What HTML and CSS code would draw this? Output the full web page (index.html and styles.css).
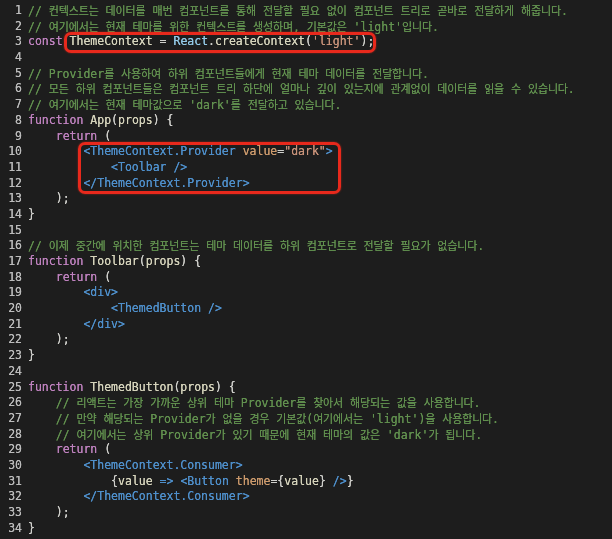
FILE: index.html
```html
<!DOCTYPE html>
<html lang="ko">
<head>
<meta charset="utf-8">
<title>ThemeContext</title>
<link rel="stylesheet" href="styles.css">
</head>
<body>
<div class="editor">
  <div class="row"><span class="ln">1</span><span class="code"><span class="c">// <span class="h">컨텍스트는</span> <span class="h">데이터를</span> <span class="h">매번</span> <span class="h">컴포넌트를</span> <span class="h">통해</span> <span class="h">전달할</span> <span class="h">필요</span> <span class="h">없이</span> <span class="h">컴포넌트</span> <span class="h">트리로</span> <span class="h">곧바로</span> <span class="h">전달하게</span> <span class="h">해줍니다</span>.</span></span></div>
  <div class="row"><span class="ln">2</span><span class="code"><span class="c">// <span class="h">여기에서는</span> <span class="h">현재</span> <span class="h">테마를</span> <span class="h">위한</span> <span class="h">컨텍스트를</span> <span class="h">생성하며</span>, <span class="h">기본값은</span> 'light'<span class="h">입니다</span>.</span></span></div>
  <div class="row"><span class="ln">3</span><span class="code"><span class="kw">const</span> <span class="fn">ThemeContext</span> <span class="p">=</span> <span class="v">React</span><span class="p">.</span><span class="fn">createContext</span><span class="p">(</span><span class="s">'light'</span><span class="p">);</span></span></div>
  <div class="row"><span class="ln">4</span><span class="code"></span></div>
  <div class="row"><span class="ln">5</span><span class="code"><span class="c">// Provider<span class="h">를</span> <span class="h">사용하여</span> <span class="h">하위</span> <span class="h">컴포넌트들에게</span> <span class="h">현재</span> <span class="h">테마</span> <span class="h">데이터를</span> <span class="h">전달합니다</span>.</span></span></div>
  <div class="row"><span class="ln">6</span><span class="code"><span class="c">// <span class="h">모든</span> <span class="h">하위</span> <span class="h">컴포넌트들은</span> <span class="h">컴포넌트</span> <span class="h">트리</span> <span class="h">하단에</span> <span class="h">얼마나</span> <span class="h">깊이</span> <span class="h">있는지에</span> <span class="h">관계없이</span> <span class="h">데이터를</span> <span class="h">읽을</span> <span class="h">수</span> <span class="h">있습니다</span>.</span></span></div>
  <div class="row"><span class="ln">7</span><span class="code"><span class="c">// <span class="h">여기에서는</span> <span class="h">현재</span> <span class="h">테마값으로</span> 'dark'<span class="h">를</span> <span class="h">전달하고</span> <span class="h">있습니다</span>.</span></span></div>
  <div class="row"><span class="ln">8</span><span class="code"><span class="kw">function</span> <span class="fn">App</span><span class="p">(</span><span class="fn">props</span><span class="p">) {</span></span></div>
  <div class="row"><span class="ln">9</span><span class="code">    <span class="kw">return</span> <span class="p">(</span></span></div>
  <div class="row"><span class="ln">10</span><span class="code">        <span class="t">&lt;ThemeContext.Provider</span> <span class="a">value</span><span class="p">=</span><span class="s">"dark"</span><span class="t">&gt;</span></span></div>
  <div class="row"><span class="ln">11</span><span class="code">            <span class="t">&lt;Toolbar /&gt;</span></span></div>
  <div class="row"><span class="ln">12</span><span class="code">        <span class="t">&lt;/ThemeContext.Provider&gt;</span></span></div>
  <div class="row"><span class="ln">13</span><span class="code">    <span class="p">);</span></span></div>
  <div class="row"><span class="ln">14</span><span class="code"><span class="p">}</span></span></div>
  <div class="row"><span class="ln">15</span><span class="code"></span></div>
  <div class="row"><span class="ln">16</span><span class="code"><span class="c">// <span class="h">이제</span> <span class="h">중간에</span> <span class="h">위치한</span> <span class="h">컴포넌트는</span> <span class="h">테마</span> <span class="h">데이터를</span> <span class="h">하위</span> <span class="h">컴포넌트로</span> <span class="h">전달할</span> <span class="h">필요가</span> <span class="h">없습니다</span>.</span></span></div>
  <div class="row"><span class="ln">17</span><span class="code"><span class="kw">function</span> <span class="fn">Toolbar</span><span class="p">(</span><span class="fn">props</span><span class="p">) {</span></span></div>
  <div class="row"><span class="ln">18</span><span class="code">    <span class="kw">return</span> <span class="p">(</span></span></div>
  <div class="row"><span class="ln">19</span><span class="code">        <span class="t">&lt;div&gt;</span></span></div>
  <div class="row"><span class="ln">20</span><span class="code">            <span class="t">&lt;ThemedButton /&gt;</span></span></div>
  <div class="row"><span class="ln">21</span><span class="code">        <span class="t">&lt;/div&gt;</span></span></div>
  <div class="row"><span class="ln">22</span><span class="code">    <span class="p">);</span></span></div>
  <div class="row"><span class="ln">23</span><span class="code"><span class="p">}</span></span></div>
  <div class="row"><span class="ln">24</span><span class="code"></span></div>
  <div class="row"><span class="ln">25</span><span class="code"><span class="kw">function</span> <span class="fn">ThemedButton</span><span class="p">(</span><span class="fn">props</span><span class="p">) {</span></span></div>
  <div class="row"><span class="ln">26</span><span class="code">    <span class="c">// <span class="h">리액트는</span> <span class="h">가장</span> <span class="h">가까운</span> <span class="h">상위</span> <span class="h">테마</span> Provider<span class="h">를</span> <span class="h">찾아서</span> <span class="h">해당되는</span> <span class="h">값을</span> <span class="h">사용합니다</span>.</span></span></div>
  <div class="row"><span class="ln">27</span><span class="code">    <span class="c">// <span class="h">만약</span> <span class="h">해당되는</span> Provider<span class="h">가</span> <span class="h">없을</span> <span class="h">경우</span> <span class="h">기본값</span>(<span class="h">여기에서는</span> 'light')<span class="h">을</span> <span class="h">사용합니다</span>.</span></span></div>
  <div class="row"><span class="ln">28</span><span class="code">    <span class="c">// <span class="h">여기에서는</span> <span class="h">상위</span> Provider<span class="h">가</span> <span class="h">있기</span> <span class="h">때문에</span> <span class="h">현재</span> <span class="h">테마의</span> <span class="h">값은</span> 'dark'<span class="h">가</span> <span class="h">됩니다</span>.</span></span></div>
  <div class="row"><span class="ln">29</span><span class="code">    <span class="kw">return</span> <span class="p">(</span></span></div>
  <div class="row"><span class="ln">30</span><span class="code">        <span class="t">&lt;ThemeContext.Consumer&gt;</span></span></div>
  <div class="row"><span class="ln">31</span><span class="code">            <span class="p">{</span><span class="fn">value</span> <span class="t">=&gt;</span> <span class="t">&lt;Button</span> <span class="a">theme</span><span class="p">={</span><span class="fn">value</span><span class="p">}</span> <span class="t">/&gt;</span><span class="p">}</span></span></div>
  <div class="row"><span class="ln">32</span><span class="code">        <span class="t">&lt;/ThemeContext.Consumer&gt;</span></span></div>
  <div class="row"><span class="ln">33</span><span class="code">    <span class="p">);</span></span></div>
  <div class="row"><span class="ln">34</span><span class="code"><span class="p">}</span></span></div>

  <div class="mark mark-one"></div>
  <div class="mark mark-two"></div>
</div>
</body>
</html>
```

FILE: styles.css
```css
html, body {
  margin: 0;
  padding: 0;
  background: #1d1d1d;
}

.editor {
  position: relative;
  width: 612px;
  height: 539px;
  box-sizing: border-box;
  padding-top: 3px;
  background: #1d1d1d;
  font-family: "DejaVu Sans Mono", "Liberation Mono", "Noto Sans CJK KR", monospace;
  font-size: 11.5px;
  color: #d4d4c8;
  filter: blur(0.35px);
  overflow: hidden;
}

.row {
  display: flex;
  height: 15.7px;
  line-height: 15.7px;
  white-space: pre;
  text-shadow: 0 0 0.6px currentColor;
}

.ln {
  width: 22px;
  flex: none;
  text-align: right;
  color: #bcbcbc;
}

.code {
  margin-left: 6px;
}

.c { color: #62914f; }
.kw { color: #bf82bf; }
.fn { color: #d6d4bc; }
.v { color: #93c9e6; }
.p { color: #d0d0cc; }
.s { color: #c9937a; }
.t { color: #4f90cc; }
.a { color: #cc9a6c; }

.h {
  font-family: "Noto Sans CJK KR", sans-serif;
  font-size: 11px;
  letter-spacing: -0.15px;
}

.mark {
  position: absolute;
  border: 3px solid #e8291c;
  border-radius: 7px;
  box-shadow: 0 0 2px rgba(255, 50, 30, 0.6);
}

.mark-one {
  left: 64px;
  top: 32px;
  width: 306px;
  height: 15px;
}

.mark-two {
  left: 78px;
  top: 142px;
  width: 257px;
  height: 46px;
}
```
